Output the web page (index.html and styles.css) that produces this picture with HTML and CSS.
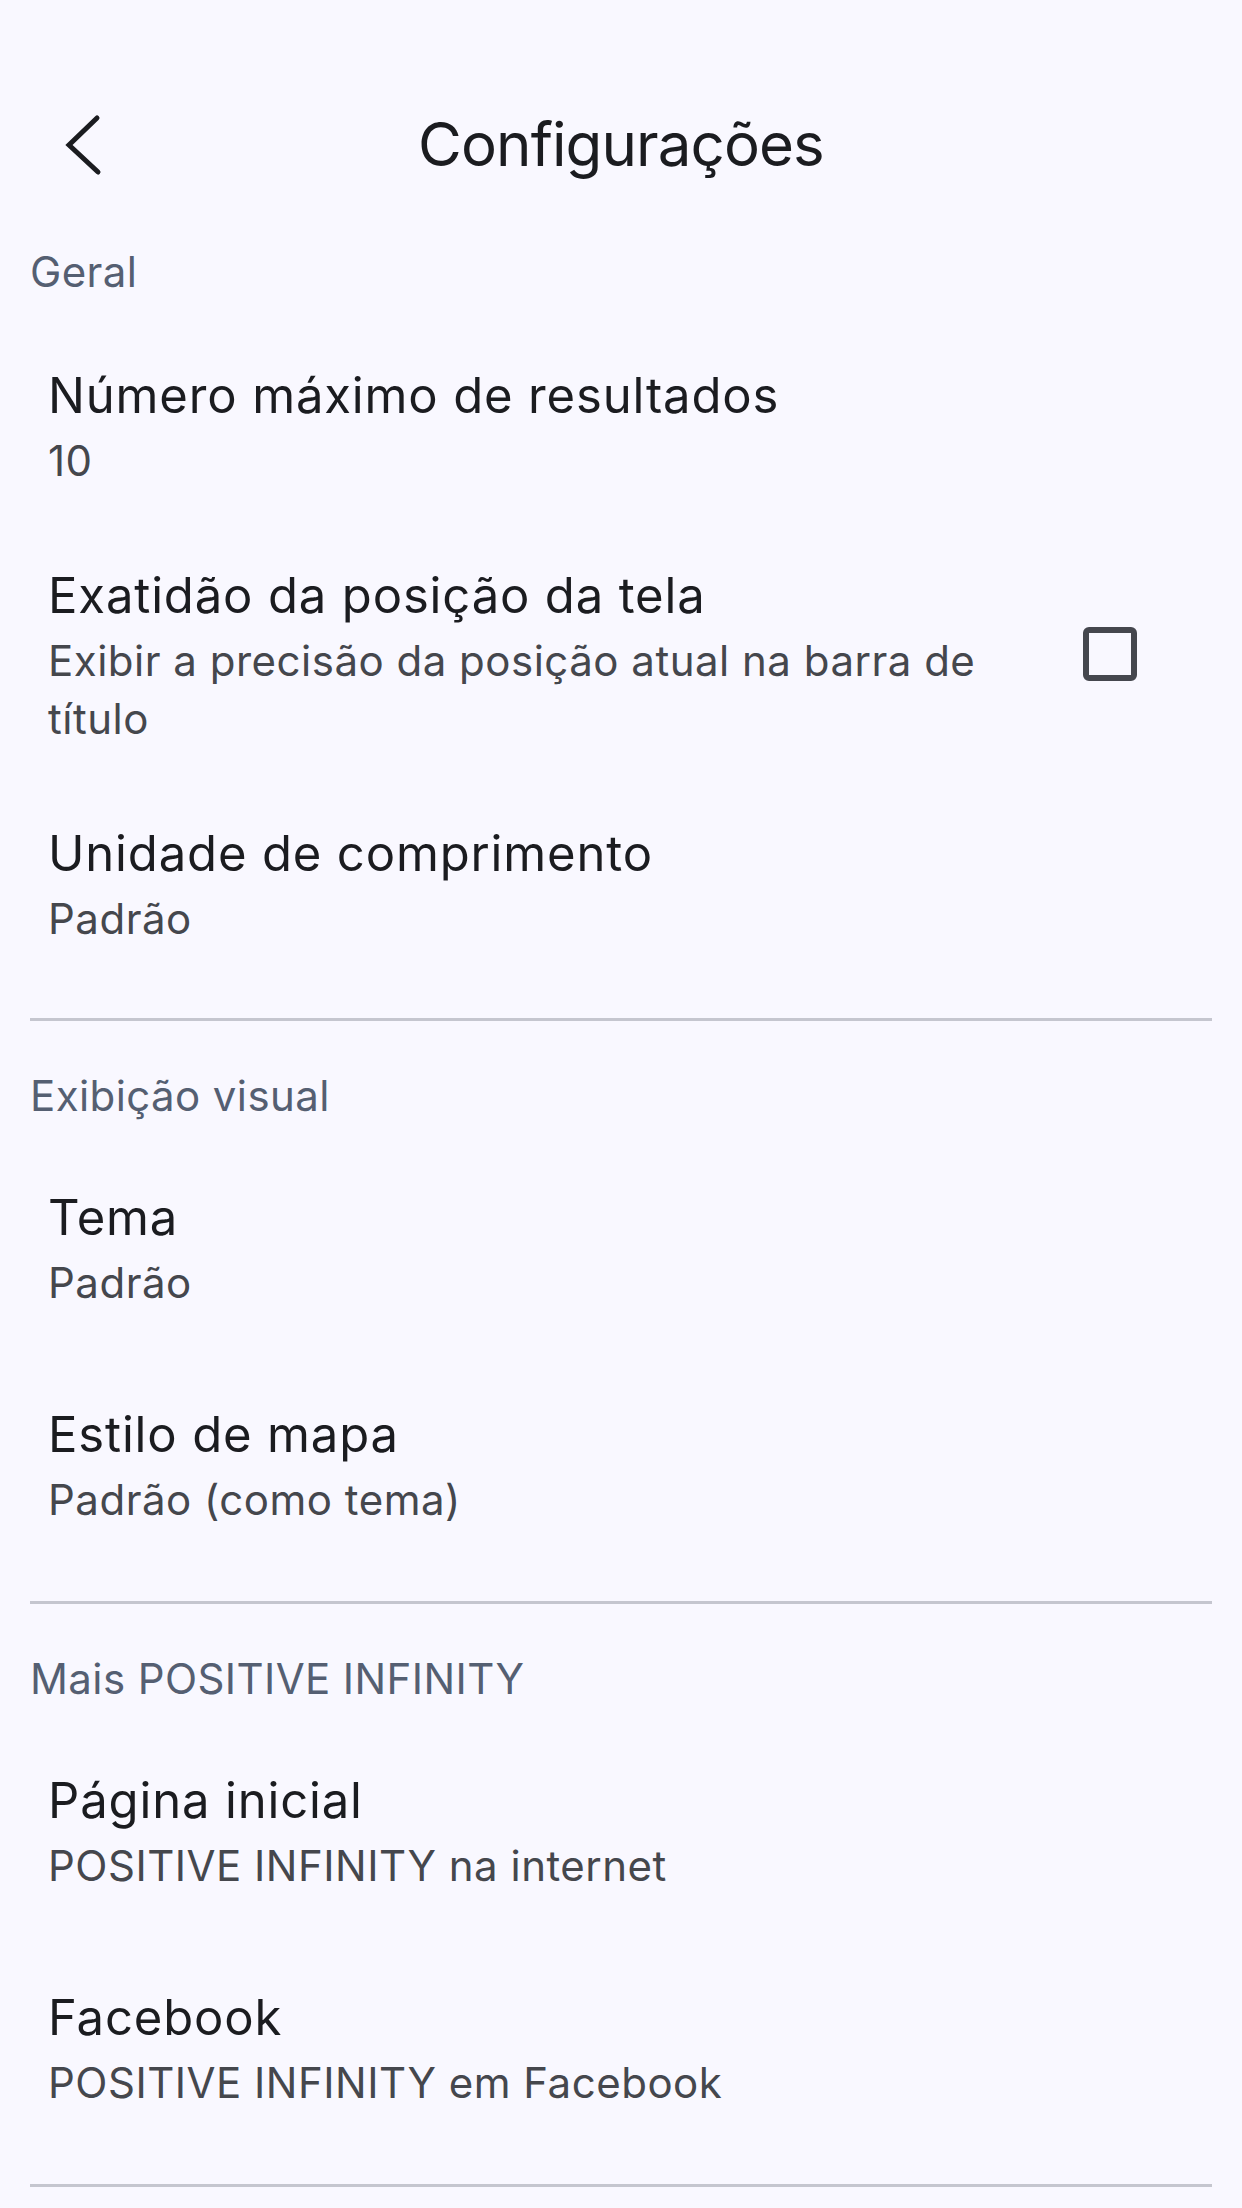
FILE: index.html
```html
<!DOCTYPE html>
<html lang="pt">
<head>
<meta charset="utf-8">
<title>Configurações</title>
<link rel="stylesheet" href="styles.css">
</head>
<body>
<div class="screen">
  <header class="appbar">
    <div class="appbar-lead">
      <svg class="back-icon" width="48" height="72" viewBox="0 0 48 72" aria-hidden="true">
        <polyline points="34,10 6,37 35,64" fill="none" stroke="#1b1c20" stroke-width="5" stroke-linecap="round" stroke-linejoin="miter"/>
      </svg>
    </div>
    <h1 class="appbar-title">Configurações</h1>
    <div class="appbar-trail"></div>
  </header>

  <section class="section section--first">
    <h2 class="section-header">Geral</h2>
    <div class="list">
      <div class="item">
        <div class="item-text">
          <div class="item-title">Número máximo de resultados</div>
          <div class="item-sub">10</div>
        </div>
      </div>
      <div class="item">
        <div class="item-text">
          <div class="item-title">Exatidão da posição da tela</div>
          <div class="item-sub">Exibir a precisão da posição atual na barra de título</div>
        </div>
        <div class="item-trail"><span class="checkbox"></span></div>
      </div>
      <div class="item">
        <div class="item-text">
          <div class="item-title">Unidade de comprimento</div>
          <div class="item-sub">Padrão</div>
        </div>
      </div>
    </div>
    <hr class="divider divider--first">
  </section>

  <section class="section">
    <h2 class="section-header">Exibição visual</h2>
    <div class="list list--roomy">
      <div class="item">
        <div class="item-text">
          <div class="item-title">Tema</div>
          <div class="item-sub">Padrão</div>
        </div>
      </div>
      <div class="item">
        <div class="item-text">
          <div class="item-title">Estilo de mapa</div>
          <div class="item-sub">Padrão (como tema)</div>
        </div>
      </div>
    </div>
    <hr class="divider">
  </section>

  <section class="section">
    <h2 class="section-header">Mais POSITIVE INFINITY</h2>
    <div class="list list--roomy">
      <div class="item">
        <div class="item-text">
          <div class="item-title">Página inicial</div>
          <div class="item-sub">POSITIVE INFINITY na internet</div>
        </div>
      </div>
      <div class="item">
        <div class="item-text">
          <div class="item-title">Facebook</div>
          <div class="item-sub">POSITIVE INFINITY em Facebook</div>
        </div>
      </div>
    </div>
    <hr class="divider">
  </section>
</div>
</body>
</html>
```

FILE: styles.css
```css
html, body {
  margin: 0;
  padding: 0;
  background: #f9f8ff;
}

body {
  font-family: Inter, Roboto, "Noto Sans", "Liberation Sans", sans-serif;
  color: #1b1c20;
  width: 1242px;
  height: 2208px;
  overflow: hidden;
}

.screen {
  padding-top: 60px;
}

.appbar {
  height: 168px;
  display: grid;
  grid-template-columns: 1fr auto 1fr;
  align-items: center;
}

.appbar-lead {
  display: flex;
  align-items: center;
  padding-left: 63px;
}

.back-icon {
  display: block;
}

.appbar-title {
  margin: 0;
  font-size: 60px;
  font-weight: 400;
  letter-spacing: -0.9px;
  color: #1b1c20;
}

.section-header {
  margin: 46px 0 0;
  padding: 0 30px;
  font-size: 42px;
  line-height: 58px;
  font-weight: 400;
  letter-spacing: 0.4px;
  color: #555f72;
}

.section--first .section-header {
  margin-top: 15px;
}

.list {
  display: flex;
  flex-direction: column;
  margin-top: 24px;
}

.list--roomy {
  margin-top: 14px;
}

.item {
  display: flex;
  align-items: center;
  padding: 35px 0 35px 48px;
}

.list--roomy .item {
  padding: 43px 0 44px 48px;
}

.item-text {
  flex: 1;
  min-width: 0;
}

.item-title {
  font-size: 49px;
  line-height: 72px;
  letter-spacing: 0.85px;
  color: #1b1c20;
}

.item-sub {
  font-size: 42px;
  line-height: 58px;
  letter-spacing: 0.5px;
  color: #45474d;
}

.item-trail {
  display: flex;
  align-items: center;
  justify-content: center;
  margin-left: 48px;
  margin-right: 105px;
}

.checkbox {
  display: block;
  box-sizing: border-box;
  width: 54px;
  height: 54px;
  border: 6px solid #45474e;
  border-radius: 6px;
}

.divider {
  margin: 28px 30px 0;
  height: 3px;
  border: 0;
  background: #c5c6cf;
}

.divider--first {
  margin-top: 35px;
}
```
